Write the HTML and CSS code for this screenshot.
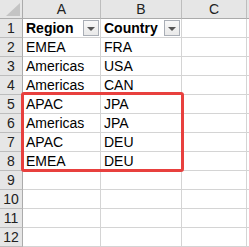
FILE: index.html
```html
<!DOCTYPE html>
<html lang="en">
<head>
    <meta charset="UTF-8">
    <title>Sheet</title>
    <link rel="stylesheet" href="styles.css">
</head>
<body>
    <div class="sheet">
        <div class="hd corner">
            <svg class="corner-tri" width="14" height="13" viewBox="0 0 14 13"><polygon points="14,0 14,13 0,13" fill="#c4c4c4"/></svg>
        </div>
        <div class="hd col">A</div>
        <div class="hd col">B</div>
        <div class="hd col">C</div>
        <div class="hd col"></div>

        <div class="hd row">1</div>
        <div class="cell head">Region<span class="filter"><i></i></span></div>
        <div class="cell head">Country<span class="filter"><i></i></span></div>
        <div class="cell"></div><div class="cell"></div>

        <div class="hd row">2</div>
        <div class="cell">EMEA</div><div class="cell">FRA</div><div class="cell"></div><div class="cell"></div>
        <div class="hd row">3</div>
        <div class="cell">Americas</div><div class="cell">USA</div><div class="cell"></div><div class="cell"></div>
        <div class="hd row">4</div>
        <div class="cell">Americas</div><div class="cell">CAN</div><div class="cell"></div><div class="cell"></div>
        <div class="hd row">5</div>
        <div class="cell">APAC</div><div class="cell">JPA</div><div class="cell"></div><div class="cell"></div>
        <div class="hd row">6</div>
        <div class="cell">Americas</div><div class="cell">JPA</div><div class="cell"></div><div class="cell"></div>
        <div class="hd row">7</div>
        <div class="cell">APAC</div><div class="cell">DEU</div><div class="cell"></div><div class="cell"></div>
        <div class="hd row">8</div>
        <div class="cell">EMEA</div><div class="cell">DEU</div><div class="cell"></div><div class="cell"></div>
        <div class="hd row">9</div>
        <div class="cell"></div><div class="cell"></div><div class="cell"></div><div class="cell"></div>
        <div class="hd row">10</div>
        <div class="cell"></div><div class="cell"></div><div class="cell"></div><div class="cell"></div>
        <div class="hd row">11</div>
        <div class="cell"></div><div class="cell"></div><div class="cell"></div><div class="cell"></div>
        <div class="hd row">12</div>
        <div class="cell"></div><div class="cell"></div><div class="cell"></div><div class="cell"></div>

        <div class="highlight"></div>
    </div>
</body>
</html>
```

FILE: styles.css
```css
body {
    margin: 0;
    background: #fff;
    font-family: "Liberation Sans", Arial, sans-serif;
    font-size: 14px;
    color: #000;
}
.sheet {
    position: relative;
    display: grid;
    grid-template-columns: 23px 78px 81px 65px 20px;
    grid-template-rows: 19px repeat(12, 19px);
    width: 249px;
    overflow: hidden;
}
.hd {
    background: #e6e6e6;
    border-right: 1px solid #bdbdbd;
    border-bottom: 1px solid #bdbdbd;
    color: #222;
    display: flex;
    align-items: center;
    justify-content: center;
}
.corner {
    position: relative;
    border-bottom-color: #ababab;
    border-right-color: #ababab;
}
.corner-tri {
    position: absolute;
    right: 2px;
    bottom: 2px;
}
.col {
    border-bottom-color: #ababab;
}
.row {
    border-right-color: #ababab;
}
.cell {
    position: relative;
    border-right: 1px solid #d4d4d4;
    border-bottom: 1px solid #d4d4d4;
    padding: 0 3px;
    display: flex;
    align-items: center;
    white-space: nowrap;
}
.head {
    font-weight: bold;
}
.filter {
    position: absolute;
    right: 1px;
    top: 1px;
    width: 14px;
    height: 14px;
    border: 1px solid #a9aeb6;
    background: linear-gradient(#f8f8f8, #e9e9e9);
    display: flex;
    align-items: center;
    justify-content: center;
}
.filter i {
    width: 0;
    height: 0;
    border-left: 4px solid transparent;
    border-right: 4px solid transparent;
    border-top: 4px solid #555;
    margin-top: 1px;
}
.highlight {
    position: absolute;
    left: 21px;
    top: 92px;
    width: 157px;
    height: 74px;
    border: 3px solid #e8403e;
    border-radius: 3px;
}
```
